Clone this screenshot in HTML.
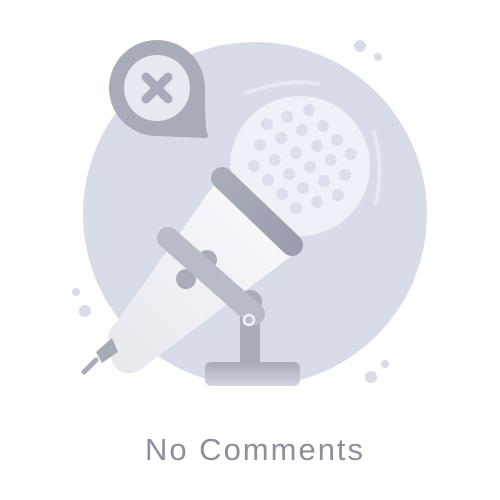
<!DOCTYPE html>
<html><head><style>
html,body{margin:0;padding:0;background:#fff;width:500px;height:500px;overflow:hidden}
.t{position:absolute;left:0;width:510px;top:432px;text-align:center;font-family:"Liberation Sans",sans-serif;font-size:31px;color:#8d909c;letter-spacing:2px}
</style></head><body>
<svg width="500" height="500" style="position:absolute;left:0;top:0">
<defs>
<linearGradient id="b" x1="0" y1="1" x2="1" y2="0"><stop offset="0" stop-color="#e6e8ef"/><stop offset="1" stop-color="#fafbfd"/></linearGradient>
<linearGradient id="band" x1="0" y1="0" x2="1" y2="1"><stop offset="0" stop-color="#a9acb9"/><stop offset="1" stop-color="#9a9dab"/></linearGradient>
<linearGradient id="base" x1="0" y1="0" x2="0" y2="1"><stop offset="0" stop-color="#a7aab7"/><stop offset="1" stop-color="#d3d6e0"/></linearGradient>
</defs>
<circle cx="255" cy="214" r="172" fill="#d8dce8"/>
<circle cx="360" cy="46" r="6" fill="#d8dce8"/><circle cx="378" cy="57" r="4" fill="#d8dce8"/>
<circle cx="76" cy="292" r="4" fill="#d8dce8"/><circle cx="85" cy="311" r="6" fill="#d8dce8"/>
<circle cx="371" cy="377" r="6" fill="#d8dce8"/><circle cx="385" cy="364" r="4" fill="#d8dce8"/>
<path d="M246 93 Q290 78 318 84" stroke="#e6e9f1" stroke-width="4" fill="none" stroke-linecap="round"/>
<path d="M374 132 Q384 165 376 203" stroke="#e6e9f1" stroke-width="4" fill="none" stroke-linecap="round"/>
<circle cx="300" cy="166" r="70" fill="#eff1f8"/>
<g fill="#dcdfe9" transform="translate(-3,0)">
<circle cx="312" cy="110" r="6"/><circle cx="290" cy="117" r="6"/><circle cx="270" cy="124" r="6"/>
<circle cx="326" cy="126" r="6"/><circle cx="305" cy="130" r="6"/><circle cx="284" cy="138" r="6"/><circle cx="263" cy="145" r="6"/>
<circle cx="340" cy="140" r="6"/><circle cx="320" cy="146" r="6"/><circle cx="299" cy="153" r="6"/><circle cx="278" cy="160" r="6"/><circle cx="257" cy="166" r="6"/>
<circle cx="354" cy="154" r="6"/><circle cx="334" cy="160" r="6"/><circle cx="313" cy="167" r="6"/><circle cx="292" cy="174" r="6"/><circle cx="271" cy="180" r="6"/>
<circle cx="348" cy="175" r="6"/><circle cx="327" cy="181" r="6"/><circle cx="306" cy="188" r="6"/><circle cx="285" cy="194" r="6"/>
<circle cx="341" cy="195" r="6"/><circle cx="320" cy="202" r="6"/><circle cx="299" cy="208" r="6"/>
</g>
<path d="M216 182 L294 254 L140 370 Q122 380 112 362 L108 345 Q106 330 118 320 Z" fill="url(#b)"/>
<path d="M112 338 L96 352 L102 363 L118 352 Z" fill="#a7aab7"/>
<line x1="96" y1="360" x2="84" y2="372" stroke="#a7aab7" stroke-width="5" stroke-linecap="round"/>
<rect x="240" y="300" width="20" height="65" fill="#a9acb9"/>
<rect x="205" y="362" width="95" height="24" rx="6" fill="url(#base)"/>
<circle cx="207" cy="260" r="10" fill="#a9acb9"/>
<circle cx="186" cy="279" r="10" fill="#a9acb9"/>
<circle cx="250" cy="302" r="12" fill="#a9acb9"/>
<line x1="222" y1="178" x2="292" y2="245" stroke="url(#band)" stroke-width="22" stroke-linecap="round"/>
<line x1="168" y1="238" x2="254" y2="314" stroke="#b9bcc8" stroke-width="22" stroke-linecap="round"/>
<circle cx="249" cy="320" r="5" fill="none" stroke="#f2f3f7" stroke-width="2.5"/>
<path d="M157 40 A48 48 0 1 0 157 136 L205 138 Q210 138 207 132 Q205 128 205 88 A48 48 0 0 0 157 40 Z" fill="#a8abb8"/>
<circle cx="157" cy="88" r="33" fill="#e7e9f0"/>
<path d="M146 77 L168 99 M168 77 L146 99" stroke="#a8abb8" stroke-width="9" stroke-linecap="round"/>
</svg>
<div class="t">No Comments</div>
</body></html>
